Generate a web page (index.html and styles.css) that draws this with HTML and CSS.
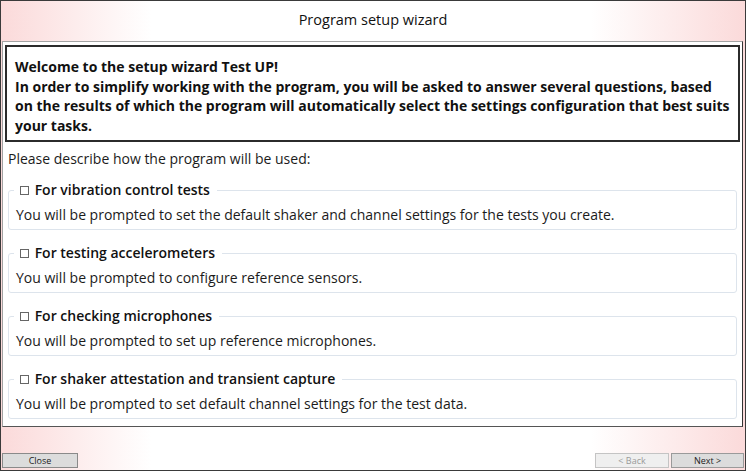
FILE: index.html
```html
<!DOCTYPE html>
<html lang="en">
<head>
    <meta charset="UTF-8">
    <meta name="viewport" content="width=device-width, initial-scale=1.0">
    <title>Program setup wizard</title>
    <link rel="stylesheet" href="styles.css">
</head>
<body>
    <div class="window">
        <header class="titlebar">Program setup wizard</header>

        <main class="panel">
            <div class="welcome">
                <p>Welcome to the setup wizard Test UP!<br>
                In order to simplify working with the program, you will be asked to answer several questions, based on the results of which the program will automatically select the settings configuration that best suits your tasks.</p>
            </div>

            <p class="prompt">Please describe how the program will be used:</p>

            <fieldset class="option">
                <legend><label><input type="checkbox"> For vibration control tests</label></legend>
                <p>You will be prompted to set the default shaker and channel settings for the tests you create.</p>
            </fieldset>

            <fieldset class="option">
                <legend><label><input type="checkbox"> For testing accelerometers</label></legend>
                <p>You will be prompted to configure reference sensors.</p>
            </fieldset>

            <fieldset class="option">
                <legend><label><input type="checkbox"> For checking microphones</label></legend>
                <p>You will be prompted to set up reference microphones.</p>
            </fieldset>

            <fieldset class="option">
                <legend><label><input type="checkbox"> For shaker attestation and transient capture</label></legend>
                <p>You will be prompted to set default channel settings for the test data.</p>
            </fieldset>
        </main>

        <footer class="footer">
            <button class="btn btn-close">Close</button>
            <div class="nav">
                <button class="btn btn-back" disabled>&lt; Back</button>
                <button class="btn btn-next">Next &gt;</button>
            </div>
        </footer>
    </div>
</body>
</html>
```

FILE: styles.css
```css
html, body {
    margin: 0;
    padding: 0;
    height: 100%;
}

body {
    font-family: "Open Sans", "Noto Sans", sans-serif;
    color: #1b1b1b;
    background: #fff;
}

.window {
    box-sizing: border-box;
    height: 100vh;
    border: 1px solid #3a3a3a;
    display: flex;
    flex-direction: column;
    background: linear-gradient(90deg, #fbdada 0, #fff 150px, #fff 590px, #fbdada 100%);
}

.titlebar {
    height: 40px;
    display: flex;
    align-items: center;
    justify-content: center;
    padding-bottom: 4px;
    box-sizing: border-box;
    font-size: 14.5px;
    color: #111;
}

.panel {
    flex: 1;
    margin: 0 2px 0 1px;
    background: #fff;
    border: 1px solid #a3a3a3;
    border-right-color: #333;
    border-bottom-color: #555;
}

.welcome {
    margin: 3px 2px 0 2px;
    border: 2px solid #2b2b2b;
    padding: 10px 8px 5px;
}

.welcome p {
    margin: 0;
    font-size: 14px;
    font-weight: bold;
    line-height: 19.5px;
    color: #111;
}

.prompt {
    margin: 7px 0 0 5px;
    font-size: 14px;
    line-height: 20px;
}

.option {
    margin: 13px 5px 0 5px;
    padding: 0 7px 4px;
    border: 1px solid #dde4ec;
    border-radius: 3px;
}

.prompt + .option {
    margin-top: 11px;
}

.option legend {
    padding: 0 7px 0 6px;
    margin-left: -2px;
    font-size: 14px;
    font-weight: 600;
    line-height: 20px;
    color: #111;
}

.option input[type="checkbox"] {
    appearance: none;
    width: 9px;
    height: 9px;
    margin: 0 2px 0 0;
    border: 1px solid #666;
    background: #fff;
    vertical-align: 0;
}

.option p {
    margin: 5px 0 0;
    font-size: 14px;
    line-height: 20px;
}

.footer {
    height: 43px;
    display: flex;
    justify-content: space-between;
    align-items: flex-end;
    padding: 0 1px 2px 1px;
    box-sizing: border-box;
}

.nav {
    display: flex;
    gap: 2px;
}

.btn {
    font-family: "Open Sans", sans-serif;
    font-size: 9px;
    line-height: 13px;
    height: 15px;
    padding: 0;
    border: 1px solid #8a8a8a;
    background: #dcdcdc;
    color: #222;
}

.btn-close {
    width: 76px;
}

.btn-back {
    width: 74px;
    background: #efefef;
    border-color: #c4c4c4;
    color: #9a9a9a;
}

.btn-next {
    width: 73px;
    border-color: #9a9a9a;
}
```
